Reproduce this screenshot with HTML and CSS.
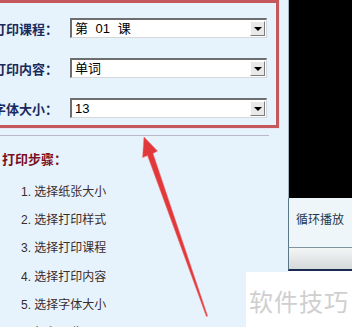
FILE: index.html
```html
<!DOCTYPE html>
<html>
    <head>
        <meta charset="utf-8">
        <title>打印设置</title>
        <link rel="stylesheet" href="styles.css">
    </head>
    <body>
        <div class="page">
            <div class="settings">
                <div class="frame">
                    <div class="row">
                        <span class="label">打印课程：</span>
                        <div class="combo"><span class="value">第 01 课</span><span class="drop"></span></div>
                    </div>
                    <div class="row">
                        <span class="label">打印内容：</span>
                        <div class="combo"><span class="value">单词</span><span class="drop"></span></div>
                    </div>
                    <div class="row">
                        <span class="label">字体大小：</span>
                        <div class="combo"><span class="value">13</span><span class="drop"></span></div>
                    </div>
                </div>
                <div class="rule"></div>
                <p class="steps-title">打印步骤：</p>
                <ul class="steps">
                    <li>1. 选择纸张大小</li>
                    <li>2. 选择打印样式</li>
                    <li>3. 选择打印课程</li>
                    <li>4. 选择打印内容</li>
                    <li>5. 选择字体大小</li>
                    <li>6. 打印预览</li>
                </ul>
            </div>
            <div class="player">
                <div class="screen"></div>
                <div class="controls">循环播放</div>
                <div class="bar"></div>
            </div>
        </div>

        <svg class="arrow" width="352" height="327" viewBox="0 0 352 327">
            <polygon points="144,137 157.5,151 153,153.5 207.6,316 206.4,316.4 147.5,155.5 142.6,157.5"
                     fill="#e1393b" stroke="rgba(236,110,110,0.55)" stroke-width="1" stroke-linejoin="round"/>
        </svg>

        <div class="watermark">软件技巧</div>
    </body>
</html>
```

FILE: styles.css
```css
body {
    margin: 0;
    width: 352px;
    height: 327px;
    overflow: hidden;
    position: relative;
    background-color: #e7f3fc;
    font-family: "Liberation Sans", "Noto Sans CJK SC", sans-serif;
}

.page {
    display: flex;
    height: 327px;
}

.settings {
    width: 288px;
    flex: none;
}

/* red highlight frame round the three combos */
.frame {
    box-sizing: border-box;
    width: 291px;
    height: 128px;
    margin-left: -12px;
    padding-top: 15px;
    border: 3px solid #c4585c;
    box-shadow: 0 0 1px #eaa5a5;
}
.row {
    display: flex;
    align-items: center;
    height: 20px;
    margin-bottom: 20px;
}
.label {
    box-sizing: border-box;
    width: 79px;
    padding-left: 2px;
    font-size: 13px;
    font-weight: bold;
    color: #1a2b5e;
    white-space: nowrap;
}
.combo {
    box-sizing: border-box;
    display: flex;
    align-items: center;
    width: 197px;
    height: 20px;
    background-color: #fff;
    border-top: 2px solid #6e6e6e;
    border-left: 2px solid #6e6e6e;
    border-right: 1px solid #d6d6d6;
    border-bottom: 1px solid #d6d6d6;
}
.value {
    padding-left: 3px;
    font-size: 13px;
    line-height: 17px;
    word-spacing: 4px;
    color: #000;
}
.drop {
    box-sizing: border-box;
    display: flex;
    align-items: center;
    justify-content: center;
    width: 15px;
    height: 15px;
    margin-left: auto;
    margin-right: 1px;
    background-color: #e9e9e9;
    border: 1px solid;
    border-color: #fff #7c7c7c #7c7c7c #fff;
}
.drop::after {
    content: "";
    border-left: 4px solid transparent;
    border-right: 4px solid transparent;
    border-top: 4px solid #000;
}

.rule {
    width: 269px;
    height: 1px;
    margin-top: 7px;
    background-color: #bdb6cc;
}

.steps-title {
    margin: 16px 0 0;
    padding-left: 2px;
    font-size: 13px;
    line-height: 16px;
    font-weight: bold;
    color: #7b0f1f;
}
.steps {
    list-style: none;
    margin: 10px 0 0;
    padding-left: 21px;
}
.steps li {
    font-size: 12px;
    line-height: 28.2px;
    color: #3b2b2b;
    white-space: nowrap;
}

/* player on the right */
.player {
    box-sizing: border-box;
    width: 64px;
    flex: none;
    background-color: #fff;
}
.screen {
    height: 198px;
    background-color: #000;
    border-left: 1px solid #9fb4c0;
}
.controls {
    box-sizing: border-box;
    height: 49px;
    padding: 14px 0 0 7px;
    background-color: #eef6fa;
    border-left: 1px solid #587888;
    font-size: 12px;
    line-height: 16px;
    color: #24384a;
    white-space: nowrap;
}
.bar {
    height: 21px;
    border-left: 1px solid #587888;
    border-top: 1px solid #7d93a0;
    border-bottom: 2px solid #1b2a52;
    background: linear-gradient(#f4f6f6, #d5d9da);
}

.arrow {
    position: absolute;
    left: 0;
    top: 0;
    pointer-events: none;
}

.watermark {
    position: absolute;
    left: 246px;
    top: 272px;
    width: 106px;
    height: 55px;
    box-sizing: border-box;
    padding: 14px 0 0 3px;
    background-color: #fff;
    font-family: "Noto Sans CJK SC", sans-serif;
    font-size: 24px;
    line-height: 30px;
    letter-spacing: 1px;
    color: #cfcfcf;
    white-space: nowrap;
    overflow: hidden;
}
```
